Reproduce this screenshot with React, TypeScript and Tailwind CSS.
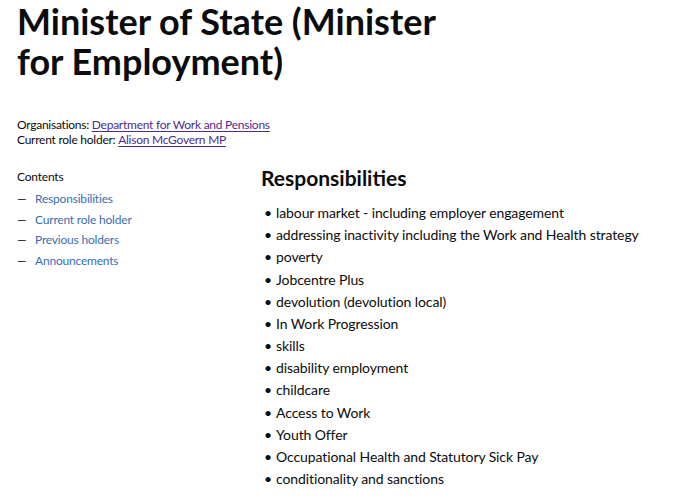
const responsibilities = [
  "labour market - including employer engagement",
  "addressing inactivity including the Work and Health strategy",
  "poverty",
  "Jobcentre Plus",
  "devolution (devolution local)",
  "In Work Progression",
  "skills",
  "disability employment",
  "childcare",
  "Access to Work",
  "Youth Offer",
  "Occupational Health and Statutory Sick Pay",
  "conditionality and sanctions",
];

const contents = ["Responsibilities", "Current role holder", "Previous holders", "Announcements"];

export default function App() {
  return (
    <div
      className="min-h-[497px] bg-white px-[17px] text-[#0b0c0c]"
      style={{ fontFamily: "Lato, 'Noto Sans', Arial, sans-serif" }}
    >
      <h1 className="pt-[1px] text-[36px] font-bold leading-[40px]">
        Minister of State (Minister
        <br />
        for Employment)
      </h1>

      <dl className="mt-[36px] text-[12px] leading-[15px] tracking-[-0.25px]">
        <div>
          <dt className="inline">Organisations: </dt>
          <dd className="inline">
            <a href="#" className="text-[#4c2c92] underline underline-offset-2">
              Department for Work and Pensions
            </a>
          </dd>
        </div>
        <div>
          <dt className="inline">Current role holder: </dt>
          <dd className="inline">
            <a href="#" className="text-[#4c2c92] underline underline-offset-2">
              Alison McGovern MP
            </a>
          </dd>
        </div>
      </dl>

      <div className="mt-[20px] flex">
        <nav className="w-[244px] shrink-0 text-[12px] tracking-[-0.2px]">
          <h2 className="leading-[20px]">Contents</h2>
          <ol className="mt-[2px]">
            {contents.map((c) => (
              <li key={c} className="flex leading-[20.6px]">
                <span className="w-[18px] shrink-0">—</span>
                <a href="#" className="text-[#3a6db5]">
                  {c}
                </a>
              </li>
            ))}
          </ol>
        </nav>

        <section className="flex-1">
          <h2 className="-mt-[2px] text-[21px] font-bold leading-[26px]">Responsibilities</h2>
          <ul className="mt-[11px] text-[14px] leading-[22.17px] tracking-[-0.1px]">
            {responsibilities.map((r) => (
              <li key={r} className="flex">
                <span className="w-[15px] shrink-0 pl-[3px]">•</span>
                <span>{r}</span>
              </li>
            ))}
          </ul>
        </section>
      </div>
    </div>
  );
}
